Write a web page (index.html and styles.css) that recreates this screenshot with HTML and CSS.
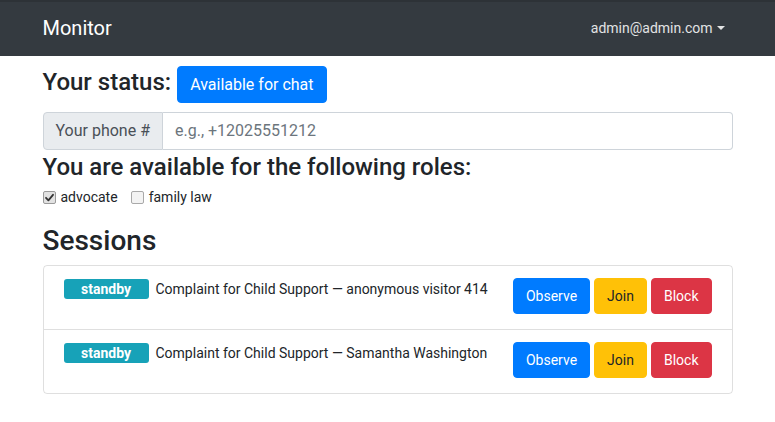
FILE: index.html
```html
<!DOCTYPE html>
<html lang="en">
<head>
<meta charset="utf-8">
<title>Monitor</title>
<link rel="stylesheet" href="styles.css">
</head>
<body>
<nav class="navbar">
  <div class="container nav-inner">
    <a class="brand" href="#">Monitor</a>
    <a class="nav-link" href="#">admin@admin.com<span class="caret"></span></a>
  </div>
</nav>
<main class="container">
  <div class="status-row">
    <h4 class="heading">Your status:</h4>
    <button class="btn btn-lg-ish btn-primary">Available for chat</button>
  </div>
  <div class="input-group">
    <span class="input-prepend">Your phone #</span>
    <input class="input" type="text" placeholder="e.g., +12025551212">
  </div>
  <h4 class="heading roles-heading">You are available for the following roles:</h4>
  <div class="roles">
    <label class="check"><span class="box checked"><svg viewBox="0 0 13 13" width="13" height="13"><path d="M3 6.8 L5.4 9.3 L10 3.8" fill="none" stroke="#333" stroke-width="1.8" stroke-linecap="round" stroke-linejoin="round"/></svg></span>advocate</label>
    <label class="check"><span class="box"></span>family law</label>
  </div>
  <h3 class="sessions-title">Sessions</h3>
  <ul class="list">
    <li class="item">
      <div class="item-text"><span class="badge">standby</span>Complaint for Child Support — anonymous visitor 414</div>
      <div class="actions">
        <button class="btn btn-primary">Observe</button>
        <button class="btn btn-warning">Join</button>
        <button class="btn btn-danger">Block</button>
      </div>
    </li>
    <li class="item">
      <div class="item-text"><span class="badge">standby</span>Complaint for Child Support — Samantha Washington</div>
      <div class="actions">
        <button class="btn btn-primary">Observe</button>
        <button class="btn btn-warning">Join</button>
        <button class="btn btn-danger">Block</button>
      </div>
    </li>
  </ul>
</main>
</body>
</html>
```

FILE: styles.css
```css
* { box-sizing: border-box; }
body {
  margin: 0;
  font-family: Roboto, "Liberation Sans", sans-serif;
  font-size: 14px;
  color: #212529;
  background: #fff;
}
.container {
  max-width: 720px;
  padding: 0 15px;
  margin: 0 auto;
}
.navbar {
  height: 56px;
  background: #343a40;
  box-shadow: inset 0 2px 0 #2d3237;
}
.nav-inner {
  height: 56px;
  display: flex;
  align-items: center;
  justify-content: space-between;
}
.brand {
  font-size: 20px;
  line-height: 30px;
  color: #fff;
  text-decoration: none;
}
.nav-link {
  font-size: 14px;
  line-height: 21px;
  padding: 8px;
  color: #e2e3e4;
  text-decoration: none;
}
.caret {
  display: inline-block;
  margin-left: 4px;
  vertical-align: 3px;
  border-top: 4.5px solid #e2e3e4;
  border-left: 4px solid transparent;
  border-right: 4px solid transparent;
}
.heading {
  margin: 0;
  font-size: 24px;
  font-weight: 500;
  line-height: 29px;
}
.status-row {
  display: flex;
  align-items: baseline;
  gap: 6px;
  margin-top: 10px;
}
.btn {
  font-family: inherit;
  font-size: 14px;
  line-height: 21px;
  padding: 7px 12px 6px;
  border: 1px solid transparent;
  border-radius: 4px;
  cursor: pointer;
}
.btn-lg-ish {
  font-size: 16px;
  line-height: 23px;
  padding: 6px 12px;
}
.btn-primary { background: #007bff; border-color: #007bff; color: #fff; }
.btn-warning { background: #ffc107; border-color: #ffc107; color: #212529; }
.btn-danger { background: #dc3545; border-color: #dc3545; color: #fff; }
.input-group {
  display: flex;
  margin-top: 9px;
  height: 38px;
}
.input-prepend {
  font-size: 16px;
  line-height: 24px;
  padding: 6px 12px;
  background: #e9ecef;
  border: 1px solid #ced4da;
  border-radius: 4px 0 0 4px;
  color: #495057;
  white-space: nowrap;
}
.input {
  flex: 1;
  min-width: 0;
  font-family: inherit;
  font-size: 16px;
  line-height: 24px;
  padding: 6px 12px;
  border: 1px solid #ced4da;
  border-left: 0;
  border-radius: 0 4px 4px 0;
  color: #495057;
  outline: none;
}
.input::placeholder { color: #6c757d; }
.roles-heading {
  margin-top: 3px;
  margin-bottom: 5px;
}
.roles {
  display: flex;
  align-items: center;
  gap: 13px;
  line-height: 21px;
}
.check {
  display: flex;
  align-items: center;
  gap: 5px;
}
.box {
  width: 13px;
  height: 13px;
  border: 1px solid #a9a9a9;
  border-radius: 2px;
  background: #f3f3f3;
  display: inline-flex;
  position: relative;
}
.box svg {
  position: absolute;
  left: -1px;
  top: -1px;
}
.box.checked {
  background: #e2e2e2;
  border-color: #9a9a9a;
}
.sessions-title {
  margin: 16px 0 8px;
  font-size: 28px;
  font-weight: 500;
  line-height: 33px;
}
.list {
  list-style: none;
  margin: 0;
  padding: 0;
  border: 1px solid rgba(0, 0, 0, 0.125);
  border-radius: 4px;
}
.item {
  display: flex;
  justify-content: space-between;
  align-items: flex-start;
  padding: 12px 20px;
  min-height: 63px;
}
.item + .item {
  border-top: 1px solid rgba(0, 0, 0, 0.125);
  min-height: 64px;
}
.item-text {
  line-height: 21px;
  font-size: 14px;
  padding-top: 1px;
}
.badge {
  display: inline-block;
  width: 85px;
  height: 20px;
  line-height: 20px;
  margin-right: 7px;
  text-align: center;
  font-size: 14px;
  font-weight: 700;
  color: #fff;
  background: #17a2b8;
  border-radius: 3px;
  vertical-align: baseline;
}
.actions {
  display: flex;
  gap: 4px;
}
```
